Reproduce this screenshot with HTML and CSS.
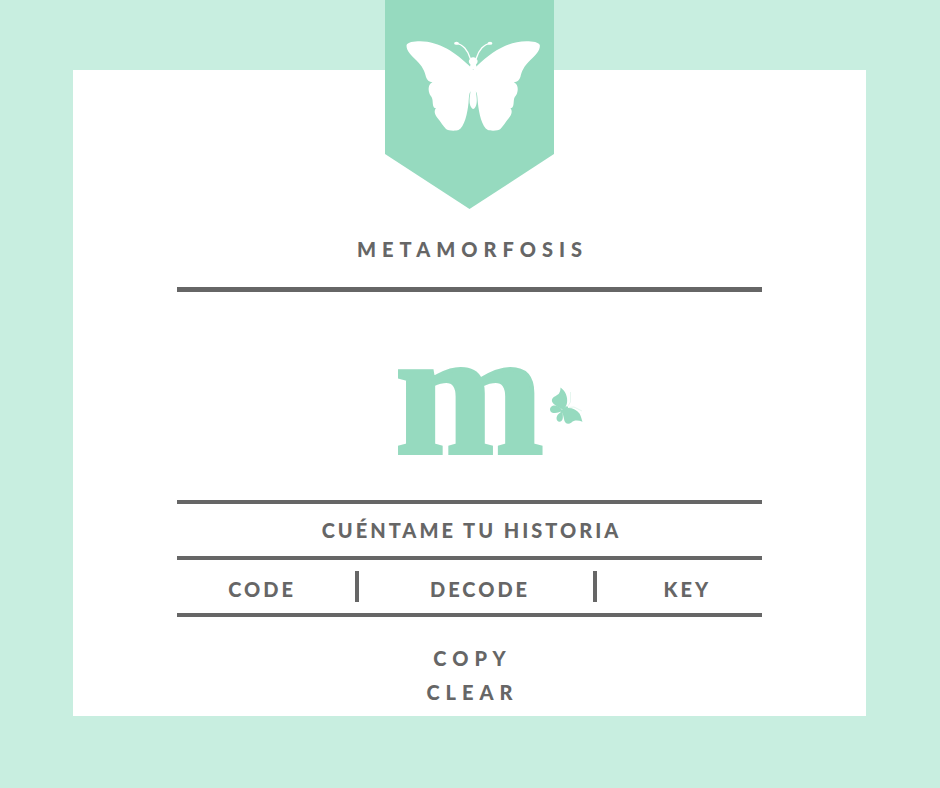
FILE: index.html
```html
<!DOCTYPE html>
<html lang="es">
<head>
<meta charset="utf-8">
<meta name="viewport" content="width=device-width, initial-scale=1">
<title>Metamorfosis</title>
<link rel="stylesheet" href="styles.css">
</head>
<body>
<main class="card">
  <div class="ribbon">
    <svg class="ribbon-shape" viewBox="0 0 169 209" aria-hidden="true">
      <path fill="#96dabf" d="M0 0H169V154L84.500 209L0 154Z"/>
      <g transform="translate(-385 0)" fill="#fff">
        <path id="wing" d="M473.500 70L469 65.500C456 53 440 41.500 420 41.200C414 41.200 407 42 406.500 45.500C406.500 51 411 55 416 60C423 67 424.500 71 426 77C427 80 429 82 432.500 82.300C428.500 84 428 89 429.300 93C430 96 432 96 432.500 100C433 104 432.500 108 436 108.300C433.500 111 435 115 437.500 118C441 122 443 126 446 129C448 131 456 131 458.500 130C464.500 127 467.500 113 468.500 103C469 97 469.200 92 470.800 91.500L473.500 92Z"/>
        <use href="#wing" transform="translate(946.400 0) scale(-1 1)"/>
        <path d="M470.800 90C469.500 98 468.800 103 471 107Q473.200 111 475.400 107C477.600 103 476.900 98 475.600 90Z"/>
        <path d="M469.500 69L470.500 64.500C468.300 62.500 468.500 60 470 59Q470.500 57.200 473.200 57.300Q475.900 57.200 476.500 59C478 60 478.200 62.500 476 64.500L477 69Z"/>
        <path d="M470.500 59C468 50 462.500 43.800 456 43.300M476 59C478.500 50 484 43.800 490.500 43.300" fill="none" stroke="#fff" stroke-width="1.300"/>
        <ellipse cx="456.500" cy="43.300" rx="2.400" ry="1.500"/>
        <ellipse cx="490" cy="43.300" rx="2.400" ry="1.500"/>
      </g>
    </svg>
  </div>

  <h1 class="title">METAMORFOSIS</h1>

  <div class="logo">
    <span class="logo-letter">m</span>
    <svg class="logo-butterfly" viewBox="0 0 36 40" aria-hidden="true">
      <g fill="#96dabf">
        <path d="M12.500 1.500C17.500 5 20 11 19 17C18.500 20 17 22 15 24C11 21 2.500 18 4 13.500C5 10.500 9.500 9.500 11 7.500C12.200 5.500 12.500 4 12.500 1.500Z"/>
        <path d="M15 23C21 20.500 28 22.500 31.500 27.500C33 30 33.500 33 34.500 35.800C30 34 26 34 23.500 36.500C20 39 16.500 37.500 16 33C15.500 29 13.500 26 15 23Z"/>
        <path d="M14.500 24.500C11 19 5.500 18.500 3 21C1 23 2 26.500 5.500 27C9 27.500 12 26 14.500 24.500Z"/>
        <path d="M14.500 25.500C9 27.500 7.500 32 9.200 34.500C11 37 14.500 35.500 14.800 32Q15 29 14.500 25.500Z"/>
        <path d="M12 26L18 20.500Q20.500 19.500 20 22L15 27Z"/>
      </g>
      <path d="M20 20L22.500 16V6M20.500 21.500L26 21L34 25" fill="none" stroke="#dff4eb" stroke-width=".8"/>
    </svg>
  </div>

  <section class="panel">
    <p class="prompt">CUÉNTAME TU HISTORIA</p>
    <div class="modes">
      <div class="mode mode-code"><button type="button">CODE</button></div>
      <div class="mode mode-decode"><button type="button">DECODE</button></div>
      <div class="mode mode-key"><button type="button">KEY</button></div>
    </div>
  </section>

  <div class="actions">
    <button type="button">COPY</button>
    <button type="button">CLEAR</button>
  </div>
</main>
</body>
</html>
```
FILE: styles.css
```css
* {
  box-sizing: border-box;
}

body {
  display: flex;
  min-height: 100vh;
  margin: 0;
  padding: 70px 74px 72px 73px;
  background: #c8eee0;
  color: #666;
  font-family: Lato, "Liberation Sans", sans-serif;
  font-size: 20px;
  font-weight: 900;
  line-height: 24px;
}

.card {
  position: relative;
  flex: 1;
  padding: 167px 104px 0;
  background: #fff;
}

.ribbon {
  position: absolute;
  top: -70px;
  left: 0;
  right: 0;
  display: flex;
  justify-content: center;
}

.ribbon-shape {
  display: block;
  width: 169px;
  height: 209px;
}

.title {
  margin: 0;
  padding: 0 0 26px 6px;
  border-bottom: 5px solid #666;
  font-size: 20px;
  font-weight: 900;
  line-height: 24px;
  letter-spacing: 6px;
  text-align: center;
}

.logo {
  display: flex;
  justify-content: center;
  align-items: center;
  height: 208px;
  padding-left: 40px;
}

.logo-letter {
  color: #96dabf;
  font-family: "Liberation Serif", serif;
  font-size: 178px;
  font-weight: 700;
  line-height: 204px;
  margin-top: -6px;
  -webkit-text-stroke: 4px #96dabf;
}

.logo-butterfly {
  width: 36px;
  height: 40px;
  margin: 20px 0 0 4px;
}

.panel {
  border-top: 4px solid #666;
  border-bottom: 4px solid #666;
}

.prompt {
  margin: 0;
  padding: 14px 0 14px 4px;
  border-bottom: 4px solid #666;
  letter-spacing: 3px;
  text-align: center;
}

.modes {
  display: grid;
  grid-template-columns: 182fr 237fr 165fr;
  padding: 11px 0;
}

.mode {
  display: flex;
  justify-content: center;
  height: 31px;
  padding-top: 4px;
}

.mode + .mode {
  padding-left: 8px;
}

.mode-code,
.mode-decode {
  border-right: 4px solid #666;
}

.mode-code {
  padding-right: 8px;
}

.modes .mode-key {
  padding-left: 16px;
}

button {
  padding: 0;
  border: 0;
  background: none;
  color: inherit;
  font: inherit;
  letter-spacing: 3px;
  cursor: pointer;
}

.actions {
  display: flex;
  flex-direction: column;
  align-items: center;
  gap: 10px;
  padding: 29px 0 12px 6px;
}

.actions button {
  letter-spacing: 6px;
}
```
